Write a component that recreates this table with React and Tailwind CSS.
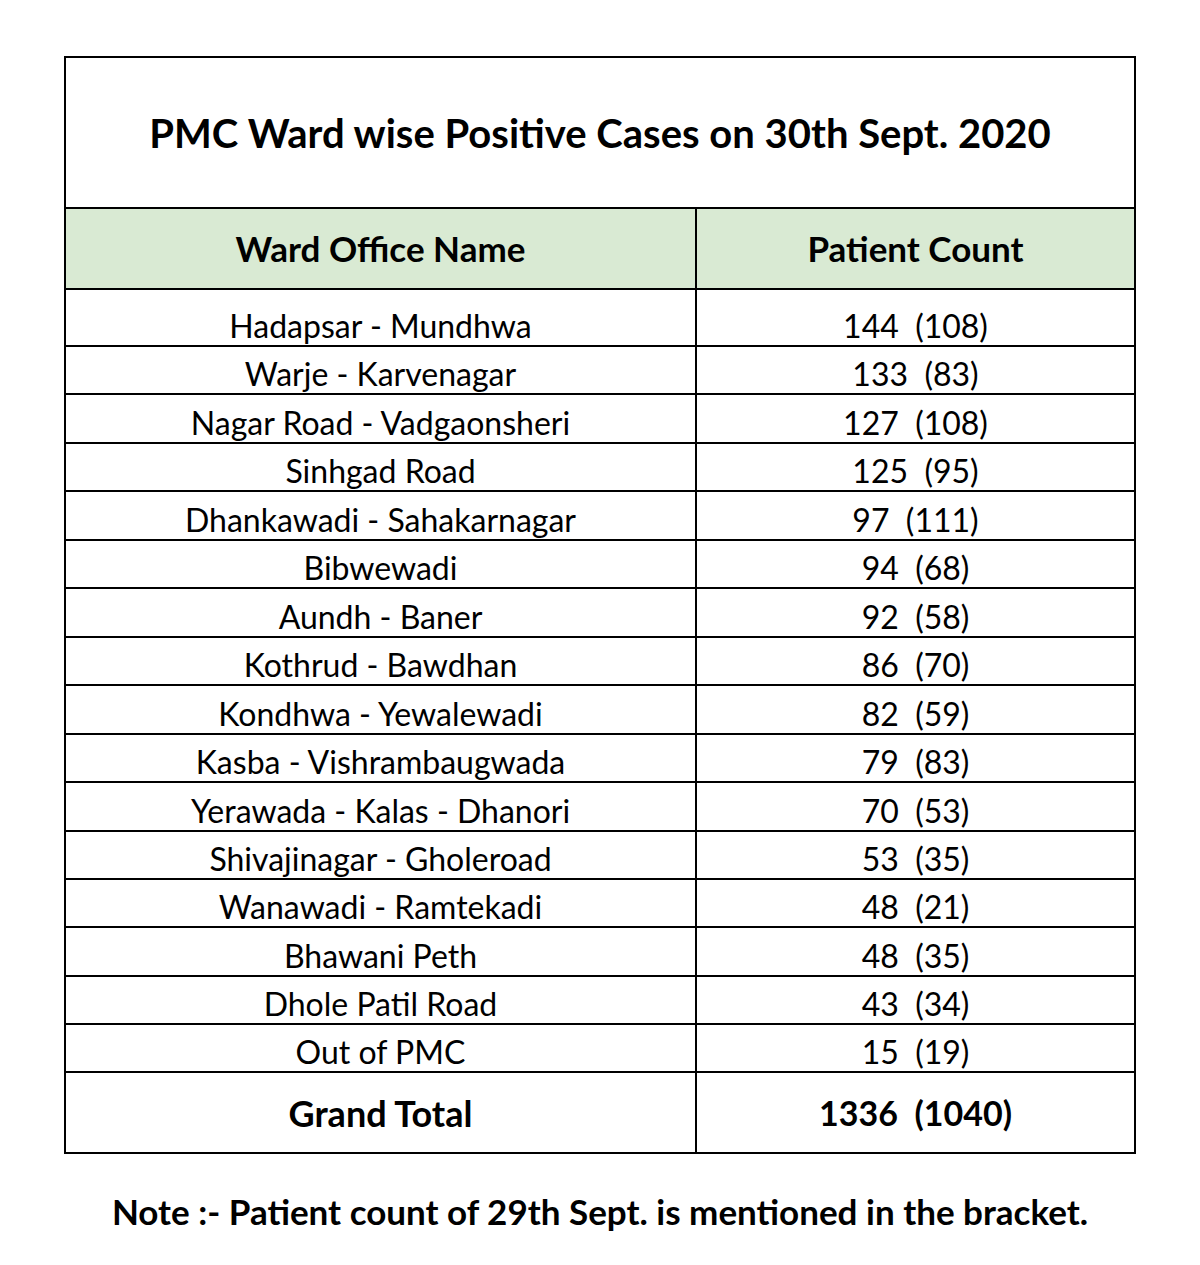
const rows = [
  { name: "Hadapsar - Mundhwa", count: "144  (108)", h: "h-[57px]" },
  { name: "Warje - Karvenagar", count: "133  (83)", h: "h-[48px]" },
  { name: "Nagar Road - Vadgaonsheri", count: "127  (108)", h: "h-[49px]" },
  { name: "Sinhgad Road", count: "125  (95)", h: "h-[48px]" },
  { name: "Dhankawadi - Sahakarnagar", count: "97  (111)", h: "h-[49px]" },
  { name: "Bibwewadi", count: "94  (68)", h: "h-[48px]" },
  { name: "Aundh - Baner", count: "92  (58)", h: "h-[49px]" },
  { name: "Kothrud - Bawdhan", count: "86  (70)", h: "h-[48px]" },
  { name: "Kondhwa - Yewalewadi", count: "82  (59)", h: "h-[49px]" },
  { name: "Kasba - Vishrambaugwada", count: "79  (83)", h: "h-[48px]" },
  { name: "Yerawada - Kalas - Dhanori", count: "70  (53)", h: "h-[49px]" },
  { name: "Shivajinagar - Gholeroad", count: "53  (35)", h: "h-[48px]" },
  { name: "Wanawadi - Ramtekadi", count: "48  (21)", h: "h-[48px]" },
  { name: "Bhawani Peth", count: "48  (35)", h: "h-[49px]" },
  { name: "Dhole Patil Road", count: "43  (34)", h: "h-[48px]" },
  { name: "Out of PMC", count: "15  (19)", h: "h-[48px]" },
];

export default function App() {
  return (
    <div className="min-h-[1265px] bg-white pt-[56px] text-black font-['Lato',sans-serif]">
      <div className="mx-auto w-[1072px] border-2 border-black">
        {/* title */}
        <div className="h-[151px] flex items-center justify-center border-b-2 border-black">
          <h1 className="text-[40px] font-bold leading-none">
            PMC Ward wise Positive Cases on 30th Sept. 2020
          </h1>
        </div>

        {/* header */}
        <div className="grid grid-cols-[631px_1fr] h-[81px] bg-[#d9ead3] border-b-2 border-black text-[35px] font-bold leading-none">
          <div className="flex items-center justify-center border-r-2 border-black">
            Ward Office Name
          </div>
          <div className="flex items-center justify-center">Patient Count</div>
        </div>

        {/* rows */}
        {rows.map((r) => (
          <div
            key={r.name}
            className={`grid grid-cols-[631px_1fr] border-b-2 border-black text-[32px] leading-none ${r.h}`}
          >
            <div className="flex items-end justify-center pb-[3px] border-r-2 border-black">
              {r.name}
            </div>
            <div className="flex items-end justify-center pb-[3px] whitespace-pre">
              {r.count}
            </div>
          </div>
        ))}

        {/* grand total */}
        <div className="grid grid-cols-[631px_1fr] h-[79px] text-[36px] font-bold leading-none">
          <div className="flex items-center justify-center border-r-2 border-black">
            Grand Total
          </div>
          <div className="flex items-center justify-center whitespace-pre text-[34px]">
            1336  (1040)
          </div>
        </div>
      </div>

      <p className="mt-[40px] text-center text-[35px] font-bold leading-none">
        Note :- Patient count of 29th Sept. is mentioned in the bracket.
      </p>
    </div>
  );
}
